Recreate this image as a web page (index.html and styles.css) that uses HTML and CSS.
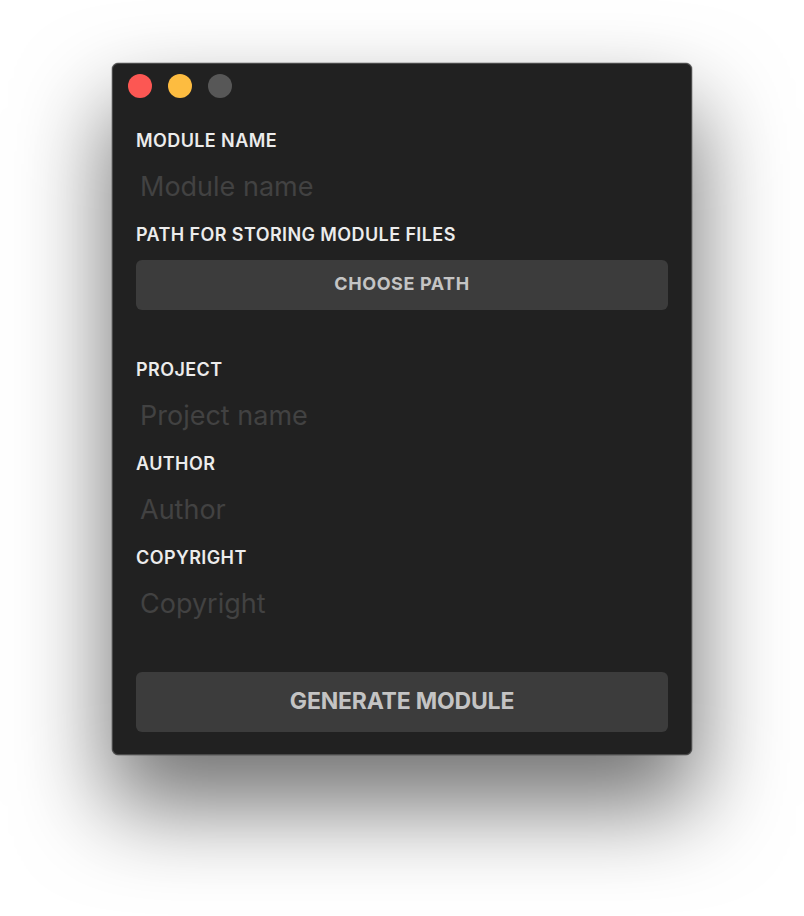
FILE: index.html
```html
<!DOCTYPE html>
<html>
<head>
<meta charset="utf-8">
<link rel="stylesheet" href="styles.css">
</head>
<body>
<div class="window">
  <div class="titlebar">
    <span class="light red"></span>
    <span class="light yellow"></span>
    <span class="light gray"></span>
  </div>
  <div class="content">
    <label class="label">MODULE NAME</label>
    <input class="field" type="text" placeholder="Module name">
    <label class="label gap">PATH FOR STORING MODULE FILES</label>
    <button class="btn small">CHOOSE PATH</button>
    <label class="label section">PROJECT</label>
    <input class="field" type="text" placeholder="Project name">
    <label class="label gap">AUTHOR</label>
    <input class="field" type="text" placeholder="Author">
    <label class="label gap">COPYRIGHT</label>
    <input class="field" type="text" placeholder="Copyright">
    <button class="btn big">GENERATE MODULE</button>
  </div>
</div>
</body>
</html>
```
FILE: styles.css
```css
html, body {
  margin: 0;
  padding: 0;
  background: #ffffff;
}
html {
  height: 100%;
}
body {
  box-sizing: border-box;
  min-height: 100%;
  padding: 63px 0 0 112px;
  font-family: Inter, "Noto Sans", sans-serif;
  overflow: hidden;
}
.window {
  box-sizing: border-box;
  width: 580px;
  height: 692px;
  background: #212121;
  border-radius: 6px;
  border: 1px solid #4a4a4a;
  box-shadow: 0 0 0 0.5px rgba(0,0,0,0.35), 0 48px 90px 4px rgba(0,0,0,0.55);
  display: flex;
  flex-direction: column;
}
.titlebar {
  height: 67px;
  box-sizing: border-box;
  padding: 10px 0 0 15px;
  display: flex;
  gap: 16px;
  align-items: flex-start;
}
.light {
  width: 24px;
  height: 24px;
  border-radius: 50%;
}
.red { background: #fc5753; }
.yellow { background: #fdbc40; }
.gray { background: #575757; }
.content {
  padding: 0 23px;
  display: flex;
  flex-direction: column;
}
.label {
  display: block;
  font-size: 18px;
  line-height: 20px;
  font-weight: 600;
  color: #ececec;
  letter-spacing: 0.4px;
}
.label.gap { margin-top: 22px; }
.label.section { margin-top: 50px; }
.field {
  margin-top: 20px;
  height: 32px;
  padding: 0 0 0 4px;
  border: none;
  outline: none;
  background: transparent;
  font-family: Inter, "Noto Sans", sans-serif;
  font-size: 27px;
  line-height: 32px;
  color: #cccccc;
}
.field::placeholder {
  color: #424242;
}
.btn {
  border: none;
  border-radius: 6px;
  background: #3c3c3c;
  color: #c4c4c4;
  font-family: Inter, "Noto Sans", sans-serif;
  font-weight: 700;
  padding: 0 0 3px 0;
}
.btn.small {
  margin-top: 15px;
  height: 50px;
  font-size: 18px;
  letter-spacing: 0.6px;
}
.btn.big {
  margin-top: 52px;
  height: 60px;
  font-size: 23px;
  letter-spacing: -0.2px;
  padding-bottom: 2px;
}
```
